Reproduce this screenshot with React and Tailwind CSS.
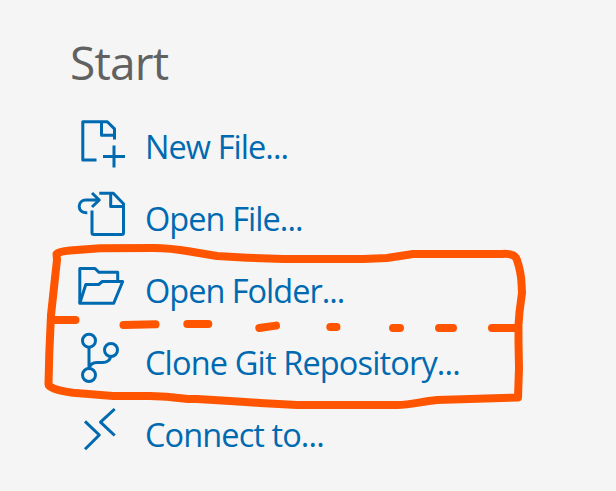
const icons = {
  newFile: (
    <>
      <path d="M20.5 49H6.8V10.7H31.3L38.5 17.9V28.5M25.5 10.7V24.3H38.5" />
      <path d="M38 34.5V56.5M27 45.5H49" />
    </>
  ),
  openFile: (
    <>
      <path d="M16 27.5V49.7Q16 51.5 18 51.5H45.7Q47.5 51.5 47.5 49.7V20.8L37.3 10.3H23.3M34.7 10.3V23.5H47.5" />
      <path d="M11.3 29.8C6 30 3.2 27 3.2 23.5C3.2 19.5 6 17 10 17H23.3M16 10L23.3 17L16 24" />
    </>
  ),
  folder: (
    <>
      <path d="M3.8 48.3V13.5H19L23 17.3H41.7V26.5" />
      <path d="M3.8 48.3L9.8 29.5H22.7L26.3 26.5H46.7L37.7 48.3Z" />
    </>
  ),
  branch: (
    <>
      <circle cx="13" cy="13.7" r="6.5" />
      <circle cx="35" cy="23" r="6.5" />
      <circle cx="13" cy="48" r="6.5" />
      <path d="M13 20.2V41.5M13 41.5C14 37.5 16.5 35.5 21 35.5H26.5C31 35.5 34.2 33 34.7 29.5" />
    </>
  ),
  connect: <path d="M9 22.3L23.3 36L9 50.3M38.7 10L24.5 23.2L38.7 36.5" />,
};

const actions = [
  { icon: "newFile", label: "New File...", spacing: "tracking-[-0.93px]" },
  { icon: "openFile", label: "Open File...", spacing: "tracking-[-0.93px]" },
  { icon: "folder", label: "Open Folder...", spacing: "tracking-[-1px]" },
  { icon: "branch", label: "Clone Git Repository...", spacing: "tracking-[-0.85px]" },
  { icon: "connect", label: "Connect to...", spacing: "tracking-[-0.9px]" },
];

function Action({ icon, label, spacing }) {
  return (
    <a className="flex h-[72px] items-center text-[#006ab1]">
      <svg
        viewBox="0 0 52 72"
        className="h-[72px] w-[52px] shrink-0"
        fill="none"
        stroke="currentColor"
        strokeWidth="3"
        strokeLinejoin="round"
      >
        {icons[icon]}
      </svg>
      <span className={`ml-[17px] whitespace-nowrap text-[32.5px] leading-[44px] ${spacing}`}>{label}</span>
    </a>
  );
}

function Annotation() {
  return (
    <svg
      viewBox="0 0 616 491"
      className="pointer-events-none absolute left-0 top-0 h-[491px] w-[616px]"
      fill="none"
      stroke="#ff5500"
      strokeWidth="8"
      strokeLinecap="round"
      strokeLinejoin="round"
    >
      <path d="M56.5 254Q59 251.5 70 250.5L100 248.3L153 248Q170 248 190 251.5L217 256L247 257.7L283 259H363L387 258L413 254H502Q515 253 517 260Q521 272 521.5 283L522 293L519.5 312L518.5 325V341L519 368L518 397.5L437 400C420 401.5 412 405 397 405H297L260 403L230 401L197 399H188L166.7 396.7L150 396H113L73 392.7Q48 389 48.5 384L49.3 353L51 315L55 278L57 260Z" />
      <path d="M53 320H75.5M123.5 325L155.5 324.3M187.3 324H208.3M259.3 328L276 325.6M330.3 327H336.5M393 328H400M439 328H453M492 328H518" />
    </svg>
  );
}

export default function App() {
  return (
    <main className="relative h-[491px] w-[616px] overflow-hidden bg-[#f5f5f5] pl-[76px] font-['Open_Sans','Noto_Sans',sans-serif]">
      <h2 className="-ml-[6px] h-[111px] pt-[31px] text-[46px] leading-[62px] tracking-[-0.8px] text-[#616161]">
        Start
      </h2>
      <nav aria-label="Start">
        {actions.map((action) => (
          <Action key={action.label} {...action} />
        ))}
      </nav>
      <Annotation />
    </main>
  );
}
